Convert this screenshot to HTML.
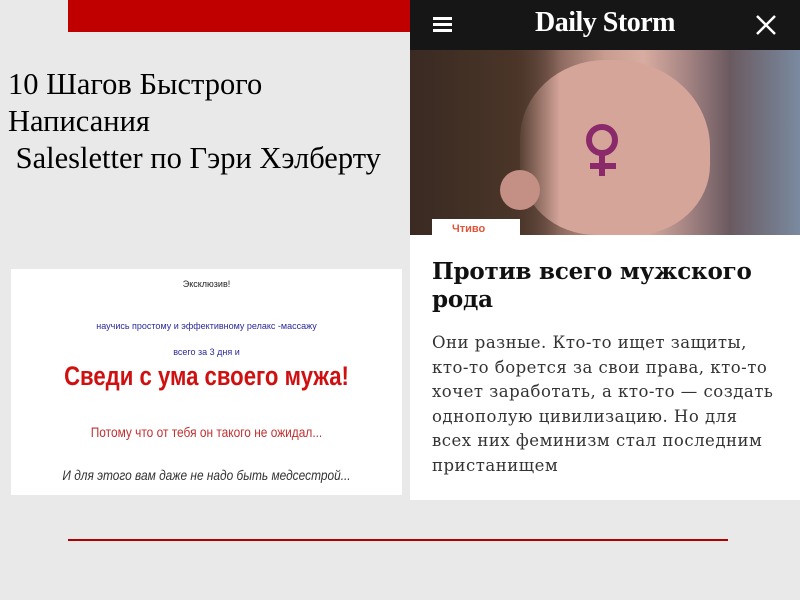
<!DOCTYPE html>
<html><head><meta charset="utf-8"><style>
body{margin:0;width:800px;height:600px;background:#e9e9e9;position:relative;overflow:hidden;font-family:"Liberation Sans",sans-serif}
.abs{position:absolute}
</style></head><body>
<div class="abs" style="left:68px;top:0;width:342px;height:32px;background:#c00000"></div>
<div class="abs" style="left:8px;top:66px;font-family:'Liberation Serif',serif;font-size:30.5px;line-height:37px;color:#000;white-space:nowrap">10 Шагов Быстрого<br>Написания<br>&nbsp;Salesletter по Гэри Хэлберту</div>

<div class="abs" style="left:11px;top:269px;width:391px;height:226px;background:#fff;text-align:center">
 <div style="position:absolute;top:10px;width:100%;font-size:9px;color:#222">Эксклюзив!</div>
 <div style="position:absolute;top:52px;width:100%;font-size:9px;color:#2a2a9a">научись простому и эффективному релакс -массажу</div>
 <div style="position:absolute;top:78px;width:100%;font-size:9px;color:#2a2a9a">всего за 3 дня и</div>
 <div style="position:absolute;top:92px;width:100%;font-size:27px;font-weight:bold;color:#d01010;transform:scaleX(0.82)">Сведи с ума своего мужа!</div>
 <div style="position:absolute;top:155px;width:100%;font-size:14px;color:#c03030;transform:scaleX(0.85)">Потому что от тебя он такого не ожидал...</div>
 <div style="position:absolute;top:198px;width:100%;font-size:14px;font-style:italic;color:#333;transform:scaleX(0.85)">И для этого вам даже не надо быть медсестрой...</div>
</div>

<div class="abs" style="left:410px;top:0;width:390px;height:50px;background:#161616"></div>
<div class="abs" style="left:433px;top:17px;width:19px;height:3px;background:#fff;box-shadow:0 6px 0 #fff,0 12px 0 #fff"></div>
<div class="abs" style="left:410px;top:7px;width:390px;text-align:center;color:#fff;font-family:'Liberation Serif',serif;font-weight:bold;font-size:28px;letter-spacing:-0.5px">Daily Storm</div>
<svg class="abs" style="left:755px;top:14px" width="22" height="22"><path d="M2 2L20 20M20 2L2 20" stroke="#fff" stroke-width="2.5"/></svg>

<div class="abs" style="left:410px;top:50px;width:390px;height:185px;background:linear-gradient(90deg,#4a3a30 0%,#3a2c24 20%,#7a5a50 35%,#c89c90 50%,#d8aca0 60%,#a08080 72%,#6a5a60 82%,#7a8aa0 100%)"></div>
<div class="abs" style="left:520px;top:60px;width:190px;height:175px;border-radius:45% 50% 40% 40%;background:#d5a59a"></div>
<div class="abs" style="left:410px;top:50px;width:150px;height:185px;background:linear-gradient(90deg,#3a2a22,#4a3528 70%,rgba(74,53,40,0))"></div>
<div class="abs" style="left:500px;top:170px;width:40px;height:40px;border-radius:50%;background:#c48f85"></div>
<svg class="abs" style="left:578px;top:120px" width="50" height="60"><circle cx="24" cy="20" r="13" fill="none" stroke="#8a2a6a" stroke-width="6"/><path d="M24 33V56M12 46H38" stroke="#8a2a6a" stroke-width="6"/></svg>
<div class="abs" style="left:432px;top:219px;width:88px;height:16px;background:#fff"></div>
<div class="abs" style="left:410px;top:235px;width:390px;height:265px;background:#fff"></div>
<div class="abs" style="left:452px;top:223px;font-size:11px;font-weight:bold;color:#e0553a">Чтиво</div>
<div class="abs" style="left:432px;top:258px;font-family:'DejaVu Serif',serif;font-weight:bold;font-size:23px;line-height:28px;color:#111;white-space:nowrap;letter-spacing:-0.2px">Против всего мужского<br>рода</div>
<div class="abs" style="left:432px;top:331px;font-family:'DejaVu Serif',serif;font-size:16.5px;line-height:24.6px;color:#333;white-space:nowrap;letter-spacing:0.5px">Они разные. Кто-то ищет защиты,<br>кто-то борется за свои права, кто-то<br>хочет заработать, а кто-то — создать<br>однополую цивилизацию. Но для<br>всех них феминизм стал последним<br>пристанищем</div>

<div class="abs" style="left:68px;top:539px;width:660px;height:2px;background:#b00000"></div>
</body></html>
